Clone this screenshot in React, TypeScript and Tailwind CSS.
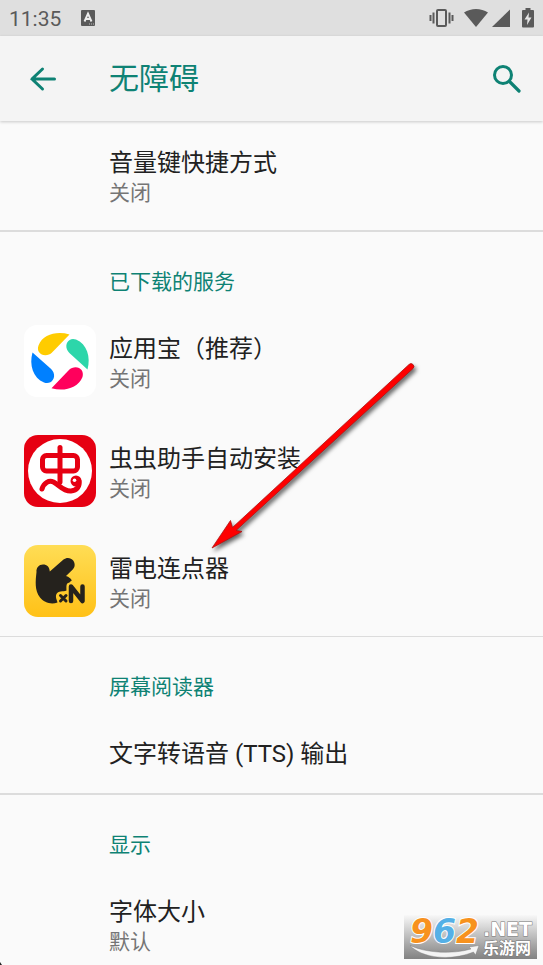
import React from "react";

const YingYongBaoIcon = () => (
  <svg viewBox="0 0 72 72" className="h-[72px] w-[72px]" aria-hidden="true">
    <rect width="72" height="72" rx="13" fill="#fff" />
    <path d="M45.500 9.500C33 6 19 9 14.500 20.500C12 27 18 32 25 29.500C27.500 28.500 28.500 27 29.500 26Z" fill="#ffcc00" />
    <path d="M63.500 44.500C67 32 63 19 52 14.500C45.500 12 40.500 18 43 24.500C44 27 45.500 28 46.500 29Z" fill="#2dd6aa" />
    <path d="M27.500 63.200C40 67 54 63 58.500 52C60.500 45.500 55 40.500 48 43C45.500 44 44.500 45.500 43.500 46.500Z" fill="#ff005c" />
    <path d="M8.500 27.500C5 40 9 53 20 57.500C26.500 60 32 54 29.500 47.500C28.500 45 27 44 26 43Z" fill="#0080ff" />
  </svg>
);

const ChongChongIcon = () => (
  <svg viewBox="0 0 72 72" className="h-[72px] w-[72px]" aria-hidden="true">
    <rect width="72" height="72" rx="14" fill="#e60012" />
    <circle cx="36" cy="36" r="32" fill="#fff" />
    <g fill="none" stroke="#e60012" strokeLinecap="round" strokeLinejoin="round">
      <rect x="18.500" y="20.500" width="35" height="15.500" rx="4" strokeWidth="5" />
      <path d="M36 12.500V47" strokeWidth="5" />
      <path d="M18 54C20 47.500 25 45 29.500 47C36 50.500 39 56.500 47 56C53 55.500 56 51 55 46" strokeWidth="5" />
    </g>
    <circle cx="52" cy="46" r="5.500" fill="#e60012" />
    <circle cx="50.500" cy="45.200" r="1.800" fill="#fff" />
  </svg>
);

const ClickerIcon = () => (
  <svg viewBox="0 0 72 72" className="h-[72px] w-[72px]" aria-hidden="true">
    <defs>
      <linearGradient id="clicker" x1="0" y1="0" x2="0" y2="1">
        <stop offset="0" stopColor="#ffdd55" />
        <stop offset="1" stopColor="#ffc117" />
      </linearGradient>
    </defs>
    <rect width="72" height="72" rx="14" fill="url(#clicker)" />
    <path
      d="M12.500 27C12 23 15 19.500 19 19.500C23 19.500 25.500 22 25.800 26.500L39.500 14.500C42.500 12 47 12.500 49.200 15.500C51.500 18.500 51 22.500 48.500 24.800L42 31C45 32 47 33.500 47.800 35.500C46 36.500 45.500 38 44 38C42 39 42.500 42 42.500 45.500C39 47 34 45.500 32.500 49C31 52 33 55 33.500 57.500C27 60 20 57.500 16 52.500C10.500 45.500 11.500 36 12.500 27Z"
      fill="#25221d"
    />
    <path d="M36.500 50.500L42 56M42 50.500L36.500 56" stroke="#25221d" strokeWidth="3" strokeLinecap="round" />
    <path d="M47 56V41.500L58.500 56V41.500" fill="none" stroke="#25221d" strokeWidth="4.500" strokeLinecap="round" strokeLinejoin="round" />
  </svg>
);

const StatusBar = () => (
  <div className="flex h-9 shrink-0 items-center justify-between bg-[#dfdfdf] px-[9px] text-[#5a5a5a]">
    <div className="flex items-center gap-5">
      <span className="pt-px text-[21px] leading-6">11:35</span>
      <svg viewBox="0 0 14 16" className="h-4 w-[14px]" aria-hidden="true">
        <rect width="14" height="16" rx="1" fill="#5a5a5a" />
        <path d="M3.500 11.500L7 3.500L10.500 11.500M4.800 9H9.200" fill="none" stroke="#efefef" strokeWidth="1.900" />
        <path d="M8 14H13" stroke="#bbb" strokeWidth="1" strokeDasharray="1 1" />
      </svg>
    </div>
    <div className="flex items-center">
      <svg viewBox="0 0 25 20" className="h-5 w-[25px]" fill="none" stroke="#5a5a5a" strokeWidth="2" aria-hidden="true">
        <rect x="8" y="2" width="9" height="16" rx="1" />
        <path d="M1.500 7V13M4.500 4.500V15.500M20.500 4.500V15.500M23.500 7V13" />
      </svg>
      <svg viewBox="0 0 24 20" className="ml-[10px] h-5 w-6" fill="#5a5a5a" aria-hidden="true">
        <path d="M0 4.500C7 -0.200 17 -0.200 24 4.500L12 19Z" />
      </svg>
      <svg viewBox="0 0 18 20" className="ml-1 h-5 w-[18px]" fill="#5a5a5a" aria-hidden="true">
        <path d="M0 19L18 1.500V19Z" />
      </svg>
      <svg viewBox="0 0 12 20" className="ml-3 h-5 w-3" aria-hidden="true">
        <path d="M1 2H3.500V0H8.500V2H11Q12 2 12 3V18.500Q12 19.500 11 19.500H1Q0 19.500 0 18.500V3Q0 2 1 2Z" fill="#5a5a5a" />
        <path d="M7 4.500L2.500 11.500H5.500L5 17L9.500 9.500H6.500Z" fill="#e6e6e6" />
      </svg>
    </div>
  </div>
);

const Header = () => (
  <header className="z-10 flex h-[85px] shrink-0 items-center bg-[#f4f4f4] px-[22px] text-[#0e8274] shadow-[0_1px_3px_rgba(0,0,0,0.2)]">
    <button type="button" aria-label="返回" className="flex h-10 w-[87px] items-center">
      <svg viewBox="0 0 40 40" className="h-10 w-10" fill="none" stroke="currentColor" strokeWidth="3" strokeLinecap="round" aria-hidden="true">
        <path d="M32.500 20H10M20.500 10L10 20L20.500 30" />
      </svg>
    </button>
    <h1 className="flex-1 pt-px text-[30px] leading-10">无障碍</h1>
    <button type="button" aria-label="搜索" className="flex h-7 w-7 items-center">
      <svg viewBox="0 0 28 28" className="h-7 w-7" fill="none" stroke="currentColor" strokeWidth="3" strokeLinecap="round" aria-hidden="true">
        <circle cx="10" cy="10" r="8.500" />
        <path d="M16.500 16.500L26 26" strokeWidth="3.200" />
      </svg>
    </button>
  </header>
);

const Category = ({ title }: { title: string }) => (
  <h2 className="pb-[10px] pl-[109px] pt-9 text-[21px] leading-7 text-[#0e8274]">{title}</h2>
);

interface ItemProps {
  title: string;
  status?: string;
  icon?: React.ReactNode;
}

const Item = ({ title, status, icon }: ItemProps) => (
  <button type="button" className="flex w-full items-center py-[23px] pl-6 text-left">
    <span className="w-[85px] shrink-0">{icon && <span className="-my-1 block">{icon}</span>}</span>
    <span className="min-w-0 flex-1 pt-1">
      <span className="block text-2xl leading-8 text-[#212121]">{title}</span>
      {status && <span className="block text-[21px] leading-7 text-[#757575]">{status}</span>}
    </span>
  </button>
);

const services: ItemProps[] = [
  { title: "应用宝（推荐）", status: "关闭", icon: <YingYongBaoIcon /> },
  { title: "虫虫助手自动安装", status: "关闭", icon: <ChongChongIcon /> },
  { title: "雷电连点器", status: "关闭", icon: <ClickerIcon /> },
];

// red pointer drawn over the service list
const Arrow = () => (
  <svg
    viewBox="0 0 220 205"
    className="pointer-events-none absolute left-[200px] top-[355px] z-20 h-[205px] w-[220px] drop-shadow-[2px_3px_2px_rgba(0,0,0,0.6)]"
    aria-hidden="true"
  >
    <path
      d="M12 193L30.500 165.500L32.500 172.500L209 9.500A2.800 2.800 0 0 1 213 13.500L36 175.500L42 176.500Z"
      fill="#fe0000"
      stroke="#b01010"
      strokeWidth="0.800"
    />
  </svg>
);

const Watermark = () => (
  <div className="pointer-events-none absolute bottom-[6px] right-[6px] z-20 flex h-11 w-[133px] justify-between bg-linear-to-b from-[#f8f8f8] via-[#bcbcbc] to-[#828282] pl-[6px] pr-[5px] font-bold">
    <svg viewBox="0 0 133 44" className="absolute inset-0 h-11 w-[133px]" aria-hidden="true">
      <path d="M6 30.500C22 38 48 39.500 67 34L65 32L75 30.500L71.500 40L69.500 37C46 46.500 18 43 6 30.500Z" fill="#f4f4f4" stroke="#777" strokeWidth="0.400" />
    </svg>
    <span className="font-['DejaVu_Sans',sans-serif] text-[33px] italic leading-[34px] text-[#f7921e] [-webkit-text-stroke:2px_#fff] [paint-order:stroke_fill]">
      9<span className="text-[#55b0e6]">6</span>2
    </span>
    <span className="flex flex-col pt-1 text-white [-webkit-text-stroke:1px_#777] [paint-order:stroke_fill]">
      <span className="font-['DejaVu_Sans',sans-serif] text-[19px] leading-5">.NET</span>
      <span className="text-base leading-5">乐游网</span>
    </span>
  </div>
);

const App = () => {
  return (
    <div className="relative flex h-screen flex-col overflow-hidden bg-[#fafafa] font-[Roboto,'Noto_Sans_CJK_SC',sans-serif]">
      <StatusBar />
      <Header />
      <main className="-mt-px flex-1 overflow-hidden">
        <section className="border-b-2 border-[#dcdcdc]">
          <Item title="音量键快捷方式" status="关闭" />
        </section>
        <section className="border-b border-[#dcdcdc]">
          <Category title="已下载的服务" />
          {services.map((service) => (
            <Item key={service.title} {...service} />
          ))}
        </section>
        <section className="border-b-2 border-[#dcdcdc]">
          <Category title="屏幕阅读器" />
          <Item title="文字转语音 (TTS) 输出" />
        </section>
        <section>
          <Category title="显示" />
          <Item title="字体大小" status="默认" />
        </section>
      </main>
      <Arrow />
      <Watermark />
      <svg viewBox="0 0 3 3" className="absolute bottom-0 left-0 h-[3px] w-[3px]" aria-hidden="true">
        <path d="M0 0L2 3H0Z" fill="#222" />
      </svg>
    </div>
  );
};

export default App;
